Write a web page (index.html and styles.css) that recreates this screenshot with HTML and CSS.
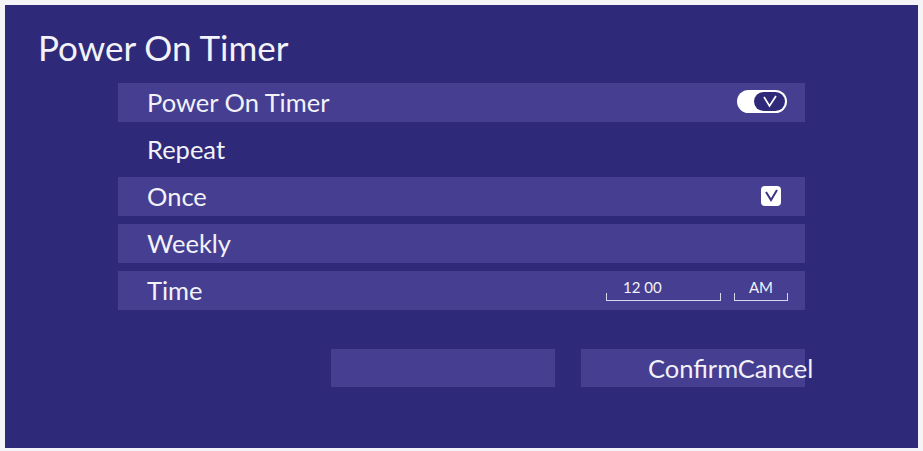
FILE: index.html
```html
<!DOCTYPE html>
<html lang="en">
<head>
    <meta charset="UTF-8">
    <meta name="viewport" content="width=device-width, initial-scale=1.0">
    <title>Power On Timer</title>
    <link rel="stylesheet" href="styles.css">
</head>
<body>
    <div class="panel">
        <h1 class="title">Power On Timer</h1>
        <ul class="list">
            <li class="row">
                <span>Power On Timer</span>
                <span class="switch"><span class="knob">
                    <svg width="16" height="13" viewBox="0 0 16 13"><path d="M2 2 L7.5 11 L14 1" fill="none" stroke="#fff" stroke-width="1.7"/></svg>
                </span></span>
            </li>
            <li class="row plain"><span>Repeat</span></li>
            <li class="row">
                <span>Once</span>
                <span class="check">
                    <svg width="15" height="13" viewBox="0 0 15 13"><path d="M2 3 L7 11 L13 1" fill="none" stroke="#3a3580" stroke-width="2"/></svg>
                </span>
            </li>
            <li class="row"><span>Weekly</span></li>
            <li class="row">
                <span>Time</span>
                <span class="time">
                    <span class="field hour"><span class="value">12 00</span></span>
                    <span class="field ampm"><span class="value">AM</span></span>
                </span>
            </li>
        </ul>
        <div class="buttons">
            <div class="btn"></div>
            <div class="btn"><span class="btn-text">ConfirmCancel</span></div>
        </div>
    </div>
</body>
</html>
```

FILE: styles.css
```css
* {
    margin: 0;
    padding: 0;
    box-sizing: border-box;
}

body {
    background: #f4f4f8;
    font-family: Lato, "Noto Sans", sans-serif;
    color: #f2f2f8;
}

ul {
    list-style: none;
}

.panel {
    margin: 5px 5px 0 5px;
    height: 443px;
    background: #2e2a79;
    padding-top: 22px;
}

.title {
    font-weight: normal;
    font-size: 35px;
    line-height: 40px;
    padding-left: 33px;
}

.list {
    margin: 16px 0 0 113px;
    width: 687px;
    display: flex;
    flex-direction: column;
    gap: 8px;
}

.row {
    height: 39px;
    background: #453e91;
    display: flex;
    align-items: center;
    justify-content: space-between;
    padding: 0 18px 2px 29px;
    font-size: 25.5px;
}

.row.plain {
    background: transparent;
}

.switch {
    width: 50px;
    height: 23px;
    background: #fff;
    border-radius: 12px;
    display: flex;
    justify-content: flex-end;
    padding: 2px;
}

.knob {
    width: 31px;
    height: 19px;
    background: #2e2a79;
    border-radius: 10px;
    display: flex;
    align-items: center;
    justify-content: center;
}

.check {
    width: 20px;
    height: 20px;
    background: #fff;
    border-radius: 4px;
    display: flex;
    align-items: center;
    justify-content: center;
    margin-right: 6px;
}

/* time pickers: a bottom line with short ticks at both ends */
.time {
    display: flex;
    gap: 13px;
    align-self: flex-end;
    margin-bottom: 7px;
    margin-right: -1px;
}

.field {
    height: 22px;
    border-bottom: 1px solid #d8d6ee;
    position: relative;
    font-size: 15px;
    line-height: 16px;
}

.field::before,
.field::after {
    content: "";
    position: absolute;
    bottom: 0;
    width: 1px;
    height: 7px;
    background: #d8d6ee;
}

.field::before {
    left: 0;
}

.field::after {
    right: 0;
}

.hour {
    width: 115px;
    padding-left: 17px;
}

.ampm {
    width: 54px;
    text-align: center;
}

.buttons {
    display: flex;
    gap: 26px;
    margin: 39px 0 0 326px;
}

.btn {
    width: 224px;
    height: 38px;
    background: #453e91;
    display: flex;
    align-items: center;
}

.btn-text {
    font-size: 25.5px;
    margin-left: 67px;
    white-space: nowrap;
}
```
